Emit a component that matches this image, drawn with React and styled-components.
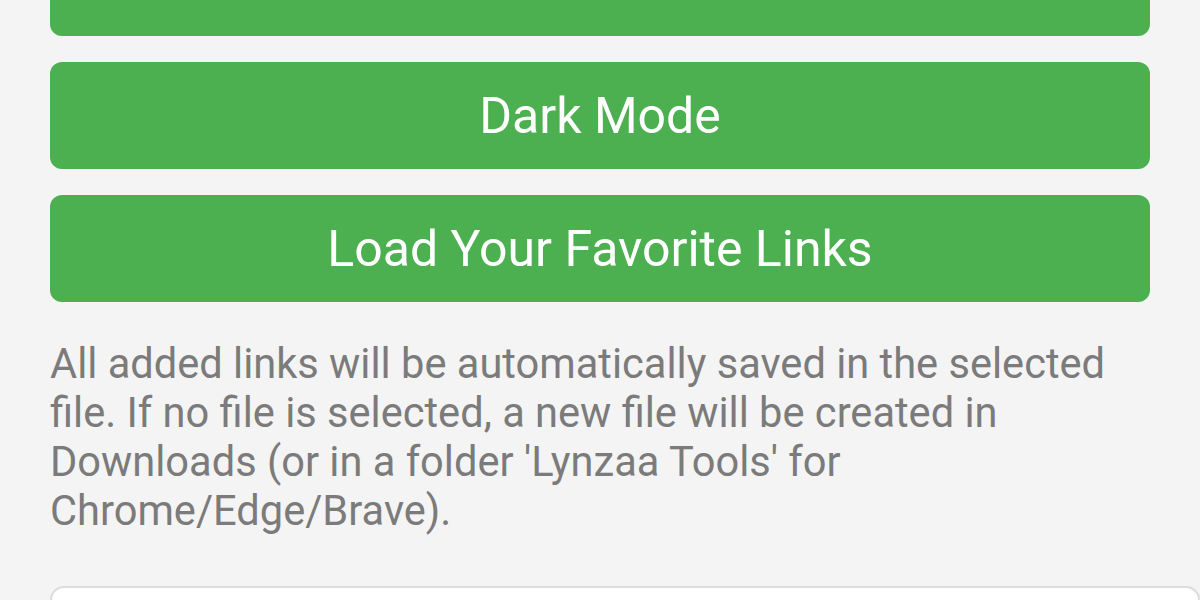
import React from 'react';
import styled, { createGlobalStyle } from 'styled-components';

const GlobalStyle = createGlobalStyle`
  html, body {
    margin: 0;
    padding: 0;
    background-color: #f4f4f4;
    font-family: Roboto, 'Noto Sans', sans-serif;
    overflow: hidden;
  }
`;

const App = () => {
  return (
    <>
      <GlobalStyle />
      <Page>
        <ButtonStack>
          <ActionButton aria-label='Select File' />
          <ActionButton>Dark Mode</ActionButton>
          <ActionButton>Load Your Favorite Links</ActionButton>
        </ButtonStack>
        <Note>
          All added links will be automatically saved in the selected file. If
          no file is selected, a new file will be created in Downloads (or in a
          folder 'Lynzaa Tools' for Chrome/Edge/Brave).
        </Note>
        <LinkInput type='text' />
      </Page>
    </>
  );
};

export default App;

// page is scrolled: the first button sits mostly above the fold
const Page = styled.div`
  display: flex;
  flex-direction: column;
  padding: 0 50px;
  margin-top: -71px;
  width: 1100px;
`;

const ButtonStack = styled.div`
  display: flex;
  flex-direction: column;
  gap: 26px;
`;

const ActionButton = styled.button`
  display: flex;
  align-items: center;
  justify-content: center;
  height: 107px;
  width: 100%;
  border: none;
  border-radius: 12px;
  background-color: #4caf50;
  color: #fff;
  font-family: Roboto, sans-serif;
  font-size: 50px;
  cursor: pointer;
`;

const Note = styled.p`
  margin: 37px 0 0;
  color: #7b7b7b;
  font-size: 41.6px;
  line-height: 49px;
  width: 1070px;
`;

const LinkInput = styled.input`
  margin-top: 51px;
  width: 1150px;
  height: 100px;
  box-sizing: border-box;
  border: 2px solid #dcdcdc;
  border-radius: 14px;
  background-color: #fff;
  font-size: 42px;
  outline: none;
`;
